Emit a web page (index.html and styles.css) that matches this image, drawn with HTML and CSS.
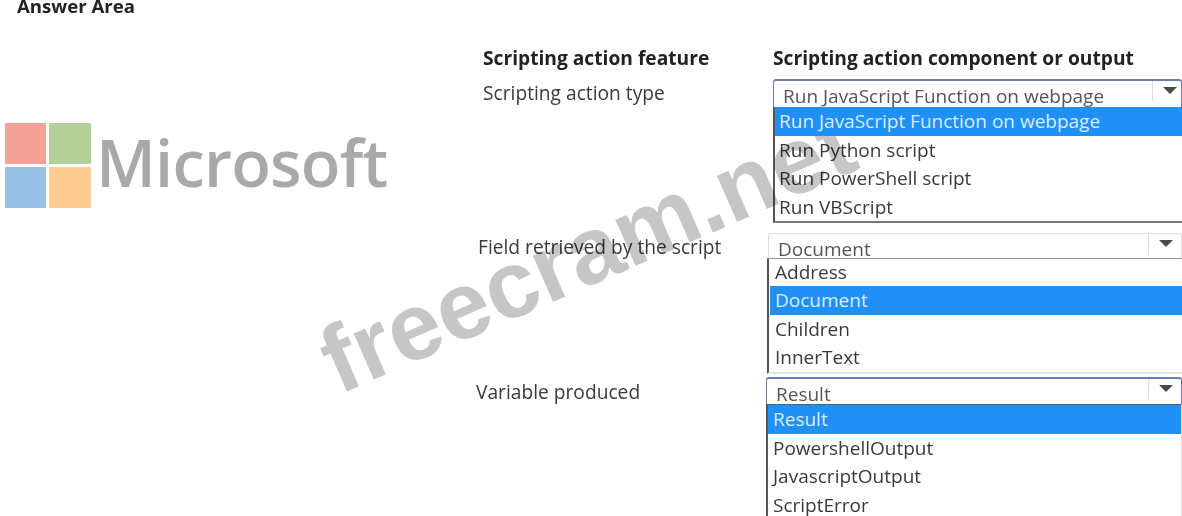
FILE: index.html
```html
<!DOCTYPE html>
<html lang="en">
<head>
    <meta charset="UTF-8">
    <meta name="viewport" content="width=device-width, initial-scale=1.0">
    <title>Answer Area</title>
    <link rel="stylesheet" href="styles.css">
</head>
<body>

    <div class="page">
        <div class="answer-title">Answer Area</div>

        <div class="content">
            <!-- Logo -->
            <div class="logo">
                <svg class="logo-mark" width="86" height="85" viewBox="0 0 86 85">
                    <rect x="0" y="0" width="41" height="41" fill="#f2a297"/>
                    <rect x="44" y="0" width="42" height="41" fill="#b3d198"/>
                    <rect x="0" y="44" width="41" height="41" fill="#98c1e6"/>
                    <rect x="44" y="44" width="42" height="41" fill="#fecd92"/>
                </svg>
                <span class="logo-text">Microsoft</span>
            </div>

            <div class="table">
                <div class="head-row">
                    <div class="head-left">Scripting action feature</div>
                    <div>Scripting action component or output</div>
                </div>

                <!-- Scripting action type -->
                <div class="row row-one">
                    <div class="label">Scripting action type</div>
                    <div class="dropdown">
                        <div class="select select-active">
                            <span class="select-text">Run JavaScript Function on webpage</span>
                            <span class="arrow-box"><span class="arrow"></span></span>
                        </div>
                        <div class="list">
                            <div class="item item-selected">Run JavaScript Function on webpage</div>
                            <div class="item">Run Python script</div>
                            <div class="item">Run PowerShell script</div>
                            <div class="item">Run VBScript</div>
                        </div>
                    </div>
                </div>

                <!-- Field retrieved -->
                <div class="row row-two">
                    <div class="label">Field retrieved by the script</div>
                    <div class="dropdown">
                        <div class="select">
                            <span class="select-text">Document</span>
                            <span class="arrow-box"><span class="arrow"></span></span>
                        </div>
                        <div class="list">
                            <div class="item">Address</div>
                            <div class="item item-selected">Document</div>
                            <div class="item">Children</div>
                            <div class="item">InnerText</div>
                        </div>
                    </div>
                </div>

                <!-- Variable produced -->
                <div class="row row-three">
                    <div class="label">Variable produced</div>
                    <div class="dropdown">
                        <div class="select select-active">
                            <span class="select-text">Result</span>
                            <span class="arrow-box"><span class="arrow"></span></span>
                        </div>
                        <div class="list">
                            <div class="item item-selected">Result</div>
                            <div class="item">PowershellOutput</div>
                            <div class="item">JavascriptOutput</div>
                            <div class="item">ScriptError</div>
                        </div>
                    </div>
                </div>
            </div>
        </div>

        <div class="watermark">freecram.net</div>
    </div>

</body>
</html>
```

FILE: styles.css
```css
body, html {
    margin: 0;
    padding: 0;
    height: 100%;
    overflow: hidden;
    background: #fff;
}

.page {
    position: relative;
    width: 1182px;
    height: 516px;
    overflow: hidden;
    font-family: "Open Sans", "Noto Sans", sans-serif;
    color: #3a3a3a;
    filter: blur(0.4px);
}

.answer-title {
    height: 14px;
    padding-left: 17px;
    font-size: 18.6px;
    font-weight: 700;
    line-height: 12px;
    color: #222;
    overflow: hidden;
}

.content {
    display: flex;
}

/* Logo */
.logo {
    display: flex;
    align-items: flex-start;
    gap: 5px;
    width: 476px;
    height: 85px;
    margin-top: 109px;
    padding-left: 5px;
    box-sizing: border-box;
    flex-shrink: 0;
}

.logo-mark {
    flex-shrink: 0;
}

.logo-text {
    font-size: 65px;
    font-weight: 600;
    letter-spacing: -0.8px;
    color: #a9a9a9;
    line-height: 78px;
}

/* Table */
.table {
    flex: 1;
    min-width: 0;
}

.head-row {
    display: flex;
    height: 30px;
    margin-top: 30px;
    padding-left: 7px;
    font-size: 19.2px;
    font-weight: 700;
    line-height: 28px;
    color: #222;
}

.head-left {
    width: 290px;
}

.row {
    display: flex;
}

.row-one {
    padding-left: 7px;
    padding-top: 5px;
}

.row-two {
    padding-left: 2px;
    padding-top: 9.5px;
}

.row-three {
    padding-top: 3.5px;
}

.label {
    width: 290px;
    flex-shrink: 0;
    font-size: 19.2px;
    line-height: 28px;
}

.row-three .label {
    margin-top: 1px;
}

.dropdown {
    flex: 1;
    min-width: 0;
}

.select {
    display: flex;
    justify-content: space-between;
    height: 25px;
    border: 1px solid #ddd;
    border-bottom: none;
    border-radius: 3px 3px 0 0;
    overflow: hidden;
    box-sizing: border-box;
    padding-left: 9px;
}

.select-active {
    height: 28px;
    border: 1px solid #6a7fa8;
    border-top-width: 2px;
    border-bottom: none;
}

.row-three .select-active {
    height: 27px;
}

.select-text {
    font-size: 19px;
    line-height: 31px;
    color: #555;
    white-space: nowrap;
}

.select-active .select-text {
    line-height: 31px;
}

.arrow-box {
    display: flex;
    width: 33px;
    height: 20px;
    box-sizing: border-box;
    padding: 6px 8px 0 10px;
    border-left: 1px solid #ddd;
}

.row-one .arrow-box {
    width: 29px;
    padding-right: 4px;
}

.arrow {
    width: 0;
    height: 0;
    border-left: 7px solid transparent;
    border-right: 7px solid transparent;
    border-top: 7px solid #4a4a4a;
}

.list {
    border-left: 2px solid #555;
    border-bottom: 2px solid #777;
    background: #fff;
}

.row-two .list {
    margin-left: -1px;
    padding-left: 1px;
    border-top: 1px solid #999;
    border-bottom: 2px solid #e4e4e4;
}

.row-three .list {
    border-top: 1px solid #4f5f7c;
    border-right: 1px solid #ddd;
}

.item {
    height: 28.5px;
    padding-left: 4px;
    font-size: 19px;
    line-height: 28px;
    white-space: nowrap;
}

.row-two .item,
.row-three .item {
    padding-left: 5px;
}

.row-two .item:first-child {
    height: 27.5px;
    line-height: 27px;
}

/* sits above the watermark */
.item-selected {
    position: relative;
    z-index: 1;
    background: #2090f5;
    color: #d8ecff;
}

/* Watermark */
.watermark {
    position: absolute;
    left: 302px;
    top: 201px;
    font-family: "Liberation Sans", sans-serif;
    font-size: 95px;
    font-weight: 700;
    line-height: 100px;
    color: #c6c6c6;
    transform: rotate(-23.5deg);
    white-space: nowrap;
    mix-blend-mode: multiply;
}
```
